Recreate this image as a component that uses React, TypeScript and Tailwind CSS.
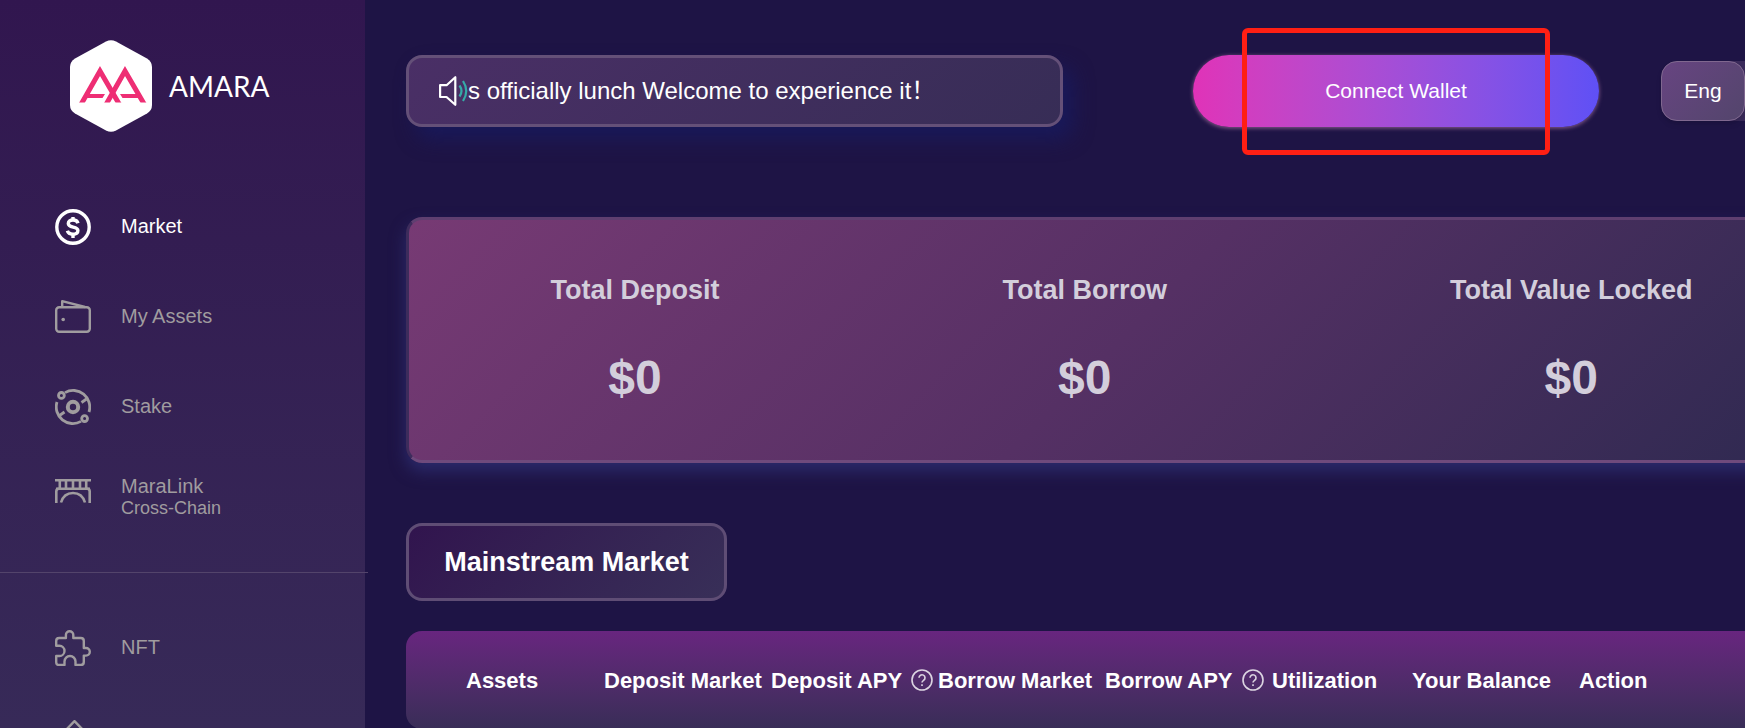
import React from 'react';

interface NavItem {
  label: string;
  sub?: string;
  icon: React.ReactNode;
  active?: boolean;
}

interface Column {
  label: string;
  width: string;
  help?: boolean;
}

function DollarIcon() {
  return (
    <svg className="w-9 h-9" viewBox="0 0 36 36" fill="none" stroke="currentColor" strokeWidth="3.4">
      <circle cx="18" cy="18" r="16.2" />
      <path d="M23 14.200c-.6-2.100-2.400-3.200-5-3.200-2.800 0-4.700 1.300-4.700 3.500 0 5 9.600 2.100 9.600 7 0 2.300-2 3.700-5 3.700-3 0-4.900-1.200-5.500-3.400" />
      <path d="M18 8v3M18 25v4" />
    </svg>
  );
}

function WalletIcon() {
  return (
    <svg className="w-9 h-9" viewBox="0 0 36 36" fill="none" stroke="currentColor" strokeWidth="2.4" strokeLinejoin="round">
      <rect x="1.200" y="8.200" width="33.600" height="24.600" rx="3" />
      <path d="M7.200 8V2.200L30 8" />
      <circle cx="8.200" cy="20.500" r="1.800" fill="currentColor" stroke="none" />
    </svg>
  );
}

function StakeIcon() {
  return (
    <svg className="w-9 h-9" viewBox="0 0 36 36" fill="none" stroke="currentColor" strokeWidth="2.8">
      <circle cx="18" cy="18" r="5.200" strokeWidth="4" />
      <circle cx="6.400" cy="6.400" r="2.900" />
      <circle cx="29.600" cy="29.600" r="2.900" />
      <path d="M10 3.600A16.600 16.600 0 0 1 34 23" />
      <path d="M26.500 13.500 31.500 10" />
      <path d="M26 32.400A16.600 16.600 0 0 1 2 13" />
      <path d="M9.500 23 4.500 26.500" />
    </svg>
  );
}

function BridgeIcon() {
  return (
    <svg className="w-9 h-9" viewBox="0 0 36 36" fill="none" stroke="currentColor" strokeWidth="2.6">
      <path d="M0 1.300h36M1 9.700h34M4.800 2v8M11 2v8M18 2v8M25 2v8M31.200 2v8" />
      <path d="M1.300 24V12.500q0-2.800 2.500-2.800M34.700 24V12.500q0-2.800-2.500-2.800" />
      <path d="M6 23.500C8 16.800 12.500 14 18 14S28 16.800 30 23.500" />
    </svg>
  );
}

function PuzzleIcon() {
  return (
    <svg className="w-9 h-9" viewBox="0 0 36 36" fill="none" stroke="currentColor" strokeWidth="2.400" strokeLinejoin="round">
      <path d="M1.200 15.800V11q0-3 3-3h6.700V5a3.700 3.700 0 0 1 7.400 0v3h7.500q3 0 3 3v7h2.200a3.800 3.800 0 0 1 0 7.600H28.800V32q0 3-3 3h-5.300v-3.500a5.500 5.500 0 0 0-11 0V35H4.200q-3 0-3-3v-6h3.200a5.100 5.100 0 0 0 0-10.200z" />
    </svg>
  );
}

function HomeIcon() {
  return (
    <svg className="w-9 h-9" viewBox="0 0 36 36" fill="none" stroke="currentColor" strokeWidth="2.400" strokeLinejoin="round">
      <path d="M2 19 19.500 1.200 34 16v18H6V16" />
    </svg>
  );
}

function SpeakerIcon() {
  return (
    <svg className="w-[29px] h-[30px] shrink-0" viewBox="0 0 29 30" fill="none" strokeWidth="2.200" strokeLinejoin="round">
      <path d="M1.100 9.200h6.500L16.300 1.200v27.600L7.500 21H1.100z" stroke="#fff" />
      <path d="M20.500 9.500q4 5.500 0 11M24 5q6.500 10 0 20" stroke="#35aaa8" />
    </svg>
  );
}

function HelpIcon() {
  return (
    <svg className="w-6 h-6 shrink-0 opacity-80" viewBox="0 0 24 24" fill="none" stroke="#fff" strokeWidth="1.6">
      <circle cx="12" cy="12" r="10" />
      <path d="M9 9.800a3 3 0 1 1 4.600 2.500c-1 .7-1.600 1.200-1.600 2.300" />
      <path d="M12 16.200v1.800" />
    </svg>
  );
}

function LogoMark() {
  return (
    <svg className="w-[82px] h-[92px]" viewBox="0 0 82 92">
      <defs>
        <clipPath id="logo-feet">
          <rect x="0" y="0" width="82" height="62.500" />
        </clipPath>
      </defs>
      <path d="M36 1.500Q41-1.200 46 1.500L77 18.500Q82 21.500 82 27v38q0 5.500-5 8.500L46 90.500q-5 2.700-10 0L5 73.500Q0 70.500 0 65V27q0-5.500 5-8.500z" fill="#fff" />
      <g fill="#ee2e74" clipPath="url(#logo-feet)">
        <path d="M10.100 66 30 31 50.300 66" fill="none" stroke="#ee2e74" strokeWidth="5" />
        <path d="M35.200 66 55 31 75.300 66" fill="none" stroke="#ee2e74" strokeWidth="5" />
        <path d="M16 54H35L32.500 58H14zM69 54H50L52.500 58H71z" />
      </g>
    </svg>
  );
}

const mainNav: NavItem[] = [
  { label: 'Market', icon: <DollarIcon />, active: true },
  { label: 'My Assets', icon: <WalletIcon /> },
  { label: 'Stake', icon: <StakeIcon /> },
  { label: 'MaraLink', sub: 'Cross-Chain', icon: <BridgeIcon /> },
];

const extraNav: NavItem[] = [
  { label: 'NFT', icon: <PuzzleIcon /> },
  { label: '', icon: <HomeIcon /> },
];

const stats = [
  { label: 'Total Deposit', value: '$0' },
  { label: 'Total Borrow', value: '$0' },
  { label: 'Total Value Locked', value: '$0' },
];

const columns: Column[] = [
  { label: 'Assets', width: 'w-[198px]' },
  { label: 'Deposit Market', width: 'w-[167px]' },
  { label: 'Deposit APY', width: 'w-[167px]', help: true },
  { label: 'Borrow Market', width: 'w-[167px]' },
  { label: 'Borrow APY', width: 'w-[167px]', help: true },
  { label: 'Utilization', width: 'w-[140px]' },
  { label: 'Your Balance', width: 'w-[167px]' },
  { label: 'Action', width: 'w-[258px]' },
];

function NavLink({ item }: { item: NavItem }) {
  return (
    <a
      href="#"
      className={`flex h-[90px] items-center gap-[30px] pl-[55px] text-xl leading-6 ${item.active ? 'text-white' : 'text-[#a09c9f]'}`}
    >
      {item.icon}
      <span className="pb-0.5">
        {item.label}
        {item.sub && <span className="block text-lg leading-5">{item.sub}</span>}
      </span>
    </a>
  );
}

export default function App() {
  return (
    <div className="flex h-screen overflow-hidden bg-[#1e1445] font-['Liberation_Sans',Arial,'Noto_Sans_CJK_SC',sans-serif] text-white">
      <aside className="w-[365px] shrink-0 bg-linear-to-b from-[#31164f] to-[#372a58]">
        <div className="flex items-center gap-[17px] pt-10 pl-[70px]">
          <LogoMark />
          <span className="font-['Lato',sans-serif] text-[28px] leading-8">AMARA</span>
        </div>
        <nav className="pt-[50px]">
          {mainNav.map(item => (
            <NavLink key={item.label} item={item} />
          ))}
          <hr className="mt-[30px] mb-[30px] -mr-[3px] border-[#53446b]" />
          {extraNav.map(item => (
            <NavLink key={item.label} item={item} />
          ))}
        </nav>
      </aside>

      <main className="min-w-0 grow pl-[41px]">
        <div className="min-w-[1431px]">
          <header className="flex items-center pt-[55px]">
            <div className="flex h-[72px] w-[657px] items-center rounded-2xl border-3 border-[#645078] bg-linear-135 from-[#4a2f66] to-[#372d56] pl-[30px] text-2xl shadow-[10px_12px_20px_#19195a]">
              <SpeakerIcon />
              <span className="whitespace-nowrap">s officially lunch Welcome to experience it！</span>
            </div>
            <div className="relative ml-[130px]">
              <button className="h-[72px] w-[406px] rounded-full bg-linear-to-r from-[#e032b8] to-[#5f50f5] text-[21px] shadow-[0_1px_4px_#8f6090]">
                Connect Wallet
              </button>
              <div className="pointer-events-none absolute -top-[27px] left-[49px] h-[127px] w-[308px] rounded-md border-5 border-[#ff1f14]" />
            </div>
            <div className="ml-[62px] flex rounded-2xl bg-[#3a2a5a] pr-[84px]">
              <button className="h-[60px] w-[84px] rounded-2xl border border-[#80688f] bg-linear-135 from-[#674481] to-[#53456c] text-[21px] shadow-md">
                Eng
              </button>
            </div>
          </header>

          <section className="mt-[90px] flex h-[246px] items-center justify-around rounded-2xl border-3 border-t-[#5f3f70] border-r-[#5a4a70] border-b-[#6f4a7c] border-l-[#3d2c5c] bg-linear-135 from-[#773a74] via-[#553064] to-[#2d2950] pb-1 font-bold text-[#d3cedb] shadow-[0_8px_16px_#2b2a6b]">
            {stats.map(stat => (
              <div key={stat.label} className="text-center">
                <h3 className="text-[27px] leading-8">{stat.label}</h3>
                <p className="mt-12 text-5xl">{stat.value}</p>
              </div>
            ))}
          </section>

          <h2 className="mt-[60px] flex h-[78px] w-[321px] items-center justify-center rounded-2xl border-3 border-[#5f4d75] bg-linear-135 from-[#31144e] to-[#382f58] text-[27px] font-bold">
            Mainstream Market
          </h2>

          <div className="mt-[30px] overflow-hidden rounded-2xl">
            <table className="w-full table-fixed">
              <thead>
                <tr className="h-[98px] bg-linear-to-b from-[#68257f] to-[#382d57] text-left text-[22px]">
                  {columns.map(col => (
                    <th key={col.label} className={`${col.width} p-0 whitespace-nowrap first:pl-[60px]`}>
                      <span className="flex items-center gap-2">
                        {col.label}
                        {col.help && <HelpIcon />}
                      </span>
                    </th>
                  ))}
                </tr>
              </thead>
            </table>
          </div>
        </div>
      </main>
    </div>
  );
}
